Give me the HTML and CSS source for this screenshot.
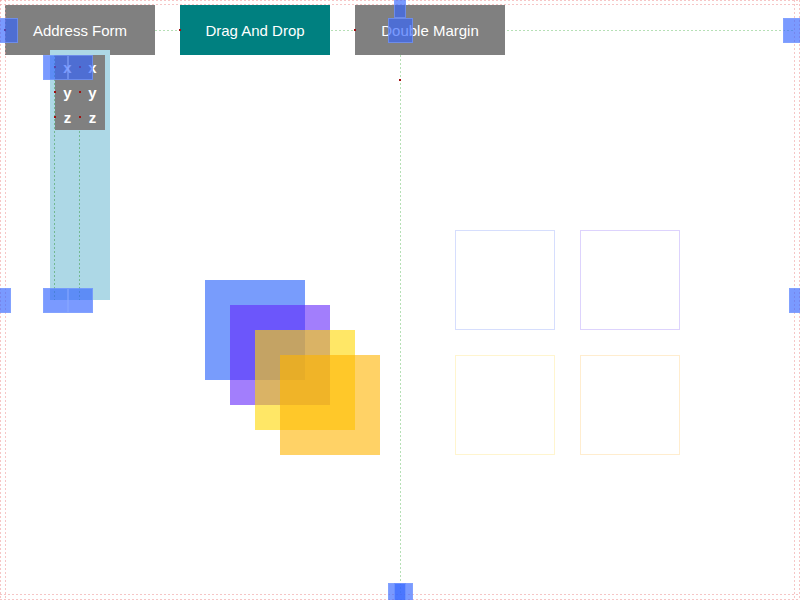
FILE: index.html
```html
<!DOCTYPE html>
<html>
<head>
<meta charset="utf-8">
<link rel="stylesheet" href="styles.css">
</head>
<body>
<div class="stage">
  <nav class="nav">
    <div class="btn">Address Form</div>
    <div class="btn active">Drag And Drop</div>
    <div class="btn">Double Margin</div>
  </nav>

  <!-- guide lines -->
  <div class="hline edge" style="left:0;top:0;width:800px"></div>
  <div class="hline edge" style="left:0;top:4px;width:800px"></div>
  <div class="hline edge" style="left:0;top:594px;width:800px"></div>
  <div class="hline edge" style="left:0;top:599px;width:800px"></div>
  <div class="vline edge" style="left:0;top:0;height:600px"></div>
  <div class="vline edge" style="left:5px;top:0;height:600px"></div>
  <div class="vline edge" style="left:794px;top:0;height:600px"></div>
  <div class="vline edge" style="left:799px;top:0;height:600px"></div>
  <div class="hline guide" style="left:155px;top:30px;width:640px"></div>
  <div class="vline guide" style="left:400px;top:55px;height:540px"></div>

  <div class="column">
    <div class="vline guide" style="left:4px;top:5px;height:245px"></div>
    <div class="vline guide" style="left:29px;top:5px;height:245px"></div>
    <div class="list">
      <span>x</span><span>x</span>
      <span>y</span><span>y</span>
      <span>z</span><span>z</span>
    </div>
  </div>

  <div class="sq blue" style="left:205px;top:280px"></div>
  <div class="sq purple" style="left:230px;top:305px"></div>
  <div class="sq yellow" style="left:255px;top:330px"></div>
  <div class="sq orange" style="left:280px;top:355px"></div>

  <div class="slots">
    <div class="slot s-blue"></div>
    <div class="slot s-purple"></div>
    <div class="slot s-yellow"></div>
    <div class="slot s-orange"></div>
  </div>

  <!-- anchor dots -->
  <i class="dot" style="left:4px;top:29px"></i>
  <i class="dot" style="left:179px;top:29px"></i>
  <i class="dot" style="left:354px;top:29px"></i>
  <i class="dot" style="left:399px;top:79px"></i>
  <i class="dot" style="left:54px;top:66px"></i>
  <i class="dot" style="left:79px;top:66px"></i>
  <i class="dot" style="left:54px;top:91px"></i>
  <i class="dot" style="left:79px;top:91px"></i>
  <i class="dot" style="left:54px;top:116px"></i>
  <i class="dot" style="left:79px;top:116px"></i>

  <!-- handles -->
  <b class="handle" style="left:-7.5px;top:17.5px"></b>
  <b class="handle narrow" style="left:393.75px;top:-7.5px"></b>
  <b class="handle" style="left:387.5px;top:17.5px"></b>
  <b class="handle" style="left:782.5px;top:17.5px"></b>
  <b class="handle narrow" style="left:-1.25px;top:287.5px"></b>
  <b class="handle narrow" style="left:788.75px;top:287.5px"></b>
  <b class="handle" style="left:387.5px;top:582.5px"></b>
  <b class="handle narrow" style="left:393.75px;top:582.5px"></b>
  <b class="handle" style="left:42.5px;top:55px"></b>
  <b class="handle" style="left:67.5px;top:55px"></b>
  <b class="handle" style="left:42.5px;top:287.5px"></b>
  <b class="handle" style="left:67.5px;top:287.5px"></b>
</div>
</body>
</html>
```

FILE: styles.css
```css
html, body {
  margin: 0;
  padding: 0;
  background: #fff;
}
body {
  font-family: "Liberation Sans", Arial, sans-serif;
}
.stage {
  position: relative;
  width: 800px;
  height: 600px;
  overflow: hidden;
}
.nav {
  display: flex;
  gap: 25px;
  padding: 5px 0 0 5px;
}
.btn {
  width: 150px;
  height: 50px;
  display: flex;
  align-items: center;
  justify-content: center;
  background: #808080;
  color: #fff;
  font-size: 15px;
  position: relative;
  z-index: 1;
}
.btn.active {
  background: #008080;
}
.hline, .vline {
  position: absolute;
  z-index: 2;
}
.hline {
  height: 1px;
}
.vline {
  width: 1px;
}
.hline.edge {
  background: repeating-linear-gradient(90deg, rgba(240,160,160,0.6) 0 2px, transparent 2px 4px);
}
.vline.edge {
  background: repeating-linear-gradient(180deg, rgba(240,160,160,0.6) 0 2px, transparent 2px 4px);
}
.hline.guide {
  z-index: 0;
  background: repeating-linear-gradient(90deg, rgba(150,210,150,0.7) 0 2px, transparent 2px 4px);
}
.vline.guide {
  z-index: 0;
  background: repeating-linear-gradient(180deg, rgba(150,210,150,0.7) 0 2px, transparent 2px 4px);
}
.column .vline.guide {
  background: repeating-linear-gradient(180deg, rgba(90,170,110,0.7) 0 2px, transparent 2px 4px);
}
.column {
  position: absolute;
  left: 50px;
  top: 50px;
  width: 60px;
  height: 250px;
  background: #add8e6;
  z-index: 3;
  box-sizing: border-box;
  padding: 5px;
}
.list {
  position: relative;
  z-index: 1;
  width: 50px;
  background: #808080;
  display: grid;
  grid-template-columns: 25px 25px;
  grid-auto-rows: 25px;
}
.list span {
  display: flex;
  align-items: center;
  justify-content: center;
  color: #fff;
  font-size: 15px;
  font-weight: bold;
}
.sq {
  position: absolute;
  width: 100px;
  height: 100px;
  z-index: 3;
}
.sq.blue { background: rgba(30, 90, 250, 0.6); }
.sq.purple { background: rgba(100, 40, 250, 0.6); }
.sq.yellow { background: rgba(255, 215, 0, 0.6); }
.sq.orange { background: rgba(255, 180, 0, 0.6); }
.slots {
  position: absolute;
  left: 455px;
  top: 230px;
  display: grid;
  grid-template-columns: 100px 100px;
  grid-auto-rows: 100px;
  gap: 25px;
  z-index: 3;
}
.slot {
  box-sizing: border-box;
  border: 1.5px solid;
}
.s-blue { border-color: #d6defd; }
.s-purple { border-color: #ddd3fd; }
.s-yellow { border-color: #fff5cf; }
.s-orange { border-color: #ffedcf; }
.dot {
  position: absolute;
  width: 2px;
  height: 2px;
  background: #a01010;
  z-index: 4;
}
.handle {
  position: absolute;
  width: 25px;
  height: 25px;
  box-sizing: border-box;
  background: rgba(50, 100, 255, 0.65);
  border: 1px solid rgba(140, 170, 255, 0.5);
  z-index: 5;
}
.handle.narrow {
  width: 12.5px;
}
```
